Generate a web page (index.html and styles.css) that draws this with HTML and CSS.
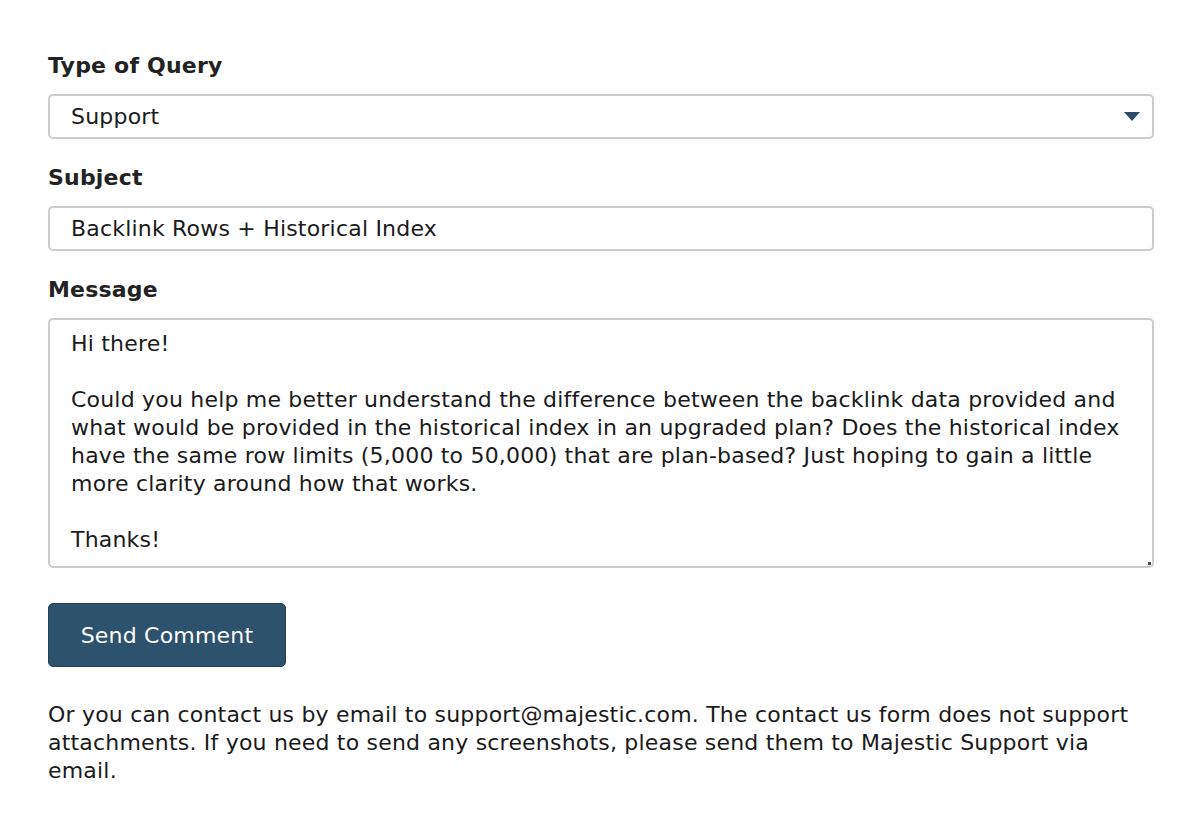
FILE: index.html
```html
<!DOCTYPE html>
<html lang="en">
<head>
<meta charset="utf-8">
<title>Contact</title>
<link rel="stylesheet" href="styles.css">
</head>
<body>
<form class="form">
  <div class="field">
    <label class="label">Type of Query</label>
    <div class="control select">
      <span class="value">Support</span>
      <svg class="caret" width="16" height="9" viewBox="0 0 16 9"><path d="M0 0H16L8 9Z" fill="#2c4d68"/></svg>
    </div>
  </div>
  <div class="field">
    <label class="label">Subject</label>
    <div class="control input"><span class="value">Backlink Rows + Historical Index</span></div>
  </div>
  <div class="field">
    <label class="label">Message</label>
    <div class="control textarea">
      <div class="line">Hi there!</div>
      <div class="line">&nbsp;</div>
      <div class="line">Could you help me better understand the difference between the backlink data provided and</div>
      <div class="line">what would be provided in the historical index in an upgraded plan? Does the historical index</div>
      <div class="line">have the same row limits (5,000 to 50,000) that are plan-based? Just hoping to gain a little</div>
      <div class="line">more clarity around how that works.</div>
      <div class="line">&nbsp;</div>
      <div class="line">Thanks!</div>
      <span class="grip"></span>
    </div>
  </div>
  <button type="button" class="btn">Send Comment</button>
  <p class="note">
    <span class="line">Or you can contact us by email to support@majestic.com. The contact us form does not support</span>
    <span class="line">attachments. If you need to send any screenshots, please send them to Majestic Support via</span>
    <span class="line">email.</span>
  </p>
</form>
</body>
</html>
```
FILE: styles.css
```css
html, body {
  margin: 0;
  padding: 0;
  background: #ffffff;
}
body {
  font-family: "DejaVu Sans", Verdana, sans-serif;
  color: #1a1a1a;
  font-size: 22px;
  letter-spacing: 0.2px;
  line-height: 28px;
}
.form {
  width: 1106px;
  margin: 0 0 0 48px;
  padding-top: 52px;
  display: flex;
  flex-direction: column;
}
.field {
  display: flex;
  flex-direction: column;
  gap: 14px;
  margin-bottom: 25px;
}
.field:last-of-type {
  margin-bottom: 35px;
}
.label {
  font-weight: bold;
  font-size: 22px;
  letter-spacing: 0.2px;
  color: #222222;
}
.control {
  box-sizing: border-box;
  border: 2px solid #cccccc;
  border-radius: 5px;
  background: #ffffff;
  padding: 0 21px;
}
.select, .input {
  height: 45px;
  display: flex;
  align-items: center;
  justify-content: space-between;
}
.caret {
  margin-right: -9px;
}
.textarea {
  height: 250px;
  padding-top: 10px;
  position: relative;
}
.line {
  display: block;
  white-space: nowrap;
}
.grip {
  position: absolute;
  right: 1px;
  bottom: 1px;
  width: 3px;
  height: 3px;
  background: #444;
}
.btn {
  align-self: flex-start;
  width: 238px;
  height: 64px;
  background: #2d526e;
  color: #ffffff;
  border: 1px solid #23425a;
  border-radius: 5px;
  font-family: inherit;
  font-size: 22px;
  letter-spacing: 0.2px;
  padding: 0;
  cursor: pointer;
}
.note {
  margin: 34px 0 0;
}
```
